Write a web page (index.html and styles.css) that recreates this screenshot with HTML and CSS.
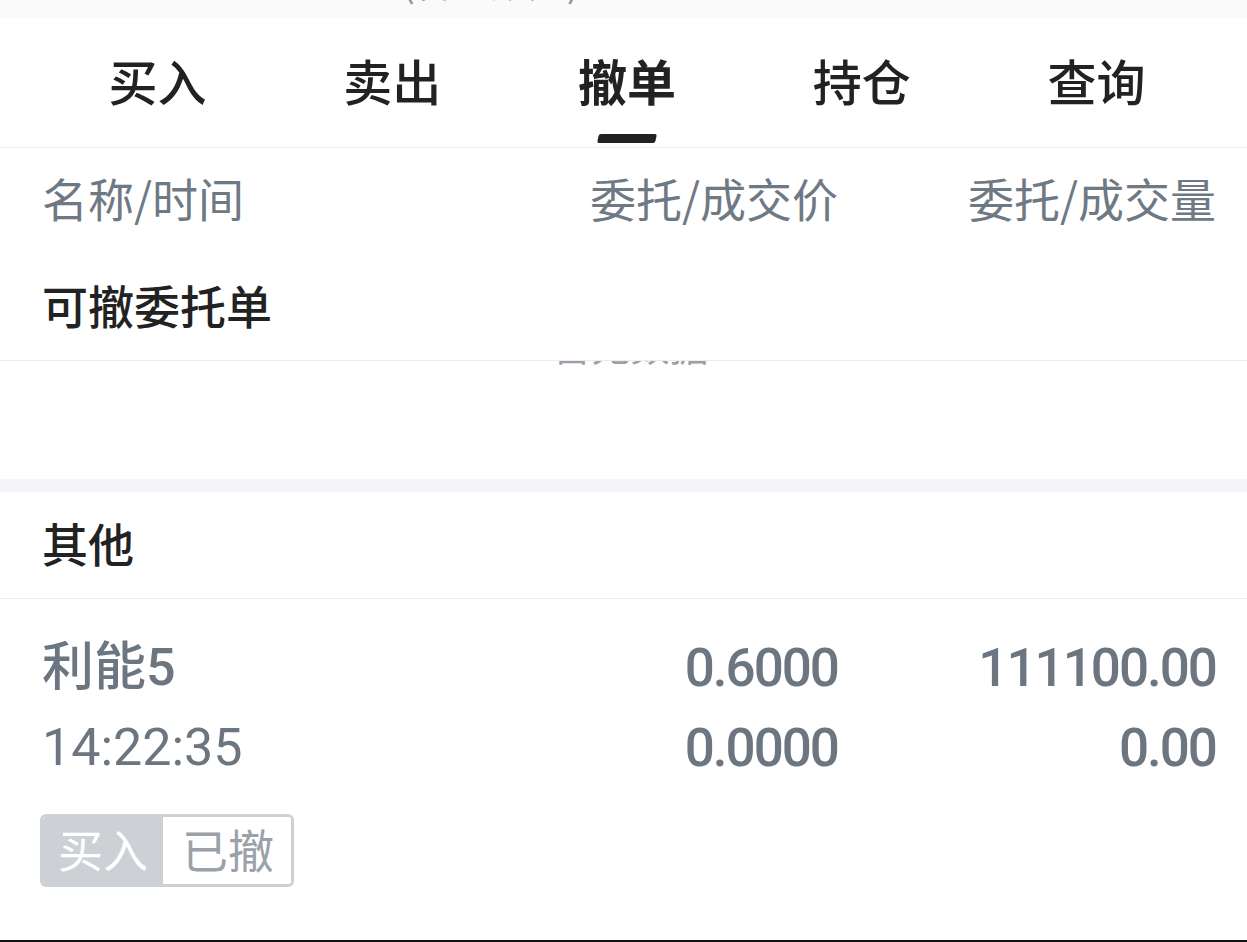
FILE: index.html
```html
<!DOCTYPE html>
<html lang="zh-CN">
<head>
<meta charset="utf-8">
<title>撤单</title>
<link rel="stylesheet" href="styles.css">
</head>
<body>
<div class="page">
  <div class="top-strip"><span class="top-text">(普通账户)  ◔</span></div>
  <nav class="tabs">
    <div class="tab"><span>买入</span></div>
    <div class="tab"><span>卖出</span></div>
    <div class="tab active"><span>撤单</span></div>
    <div class="tab"><span>持仓</span></div>
    <div class="tab"><span>查询</span></div>
  </nav>
  <div class="col-head">
    <span class="c-name">名称/时间</span>
    <span class="c-price">委托/成交价</span>
    <span class="c-qty">委托/成交量</span>
  </div>
  <section class="group">
    <div class="group-title">可撤委托单</div>
    <div class="empty"><span class="empty-text">暂无数据</span></div>
  </section>
  <div class="gap"></div>
  <section class="group">
    <div class="group-title">其他</div>
    <div class="order">
      <div class="order-grid">
        <span class="o-name">利能5</span>
        <span class="o-num">0.6000</span>
        <span class="o-num">111100.00</span>
        <span class="o-time">14:22:35</span>
        <span class="o-num">0.0000</span>
        <span class="o-num">0.00</span>
      </div>
      <div class="badge"><span class="badge-side">买入</span><span class="badge-state">已撤</span></div>
    </div>
  </section>
  <div class="spacer"></div>
  <div class="bottom-line"></div>
</div>
</body>
</html>
```
FILE: styles.css
```css
* { box-sizing: border-box; margin: 0; padding: 0; }
html, body { width: 1247px; height: 942px; overflow: hidden; background: #fff; }
body { font-family: "Noto Sans CJK SC", "Noto Sans", sans-serif; color: #222; }
.page { display: flex; flex-direction: column; height: 942px; }

.top-strip { height: 18px; background: #fafafa; overflow: hidden; padding-left: 402px; }
.top-text { display: block; font-size: 38px; line-height: 40px; margin-top: -39px; color: #8f96a0; white-space: pre; }

.tabs { display: flex; height: 130px; padding: 0 33px 0 40px; border-bottom: 1px solid #ebebeb; background: #fff; }
.tab { flex: 1; position: relative; display: flex; justify-content: center; padding-top: 32px; }
.tab span { font-size: 49px; line-height: 60px; font-weight: 500; color: #222; }
.tab.active span { font-weight: 700; }
.tab.active::after { content: ""; position: absolute; left: 50%; top: 116px; width: 58px; height: 9px; margin-left: -29px; background: #222; border-radius: 2px; transform: skewX(-12deg); }

.col-head { display: grid; grid-template-columns: 1fr 300px 378px; padding: 0 31px 8px 42px; height: 106px; align-items: center; font-size: 46px; color: #6f7984; }
.col-head .c-price, .col-head .c-qty { text-align: right; }

.group-title { height: 107px; display: flex; align-items: center; padding: 0 0 7px 42px; font-size: 46px; font-weight: 500; color: #222; border-bottom: 1px solid #ececec; }

.empty { height: 118px; overflow: hidden; text-align: center; padding-left: 14px; }
.empty-text { display: block; font-size: 39px; line-height: 40px; margin-top: -37px; color: #9aa1a9; }

.gap { height: 13px; background: #f4f5f8; }

.order { padding: 29px 31px 0 42px; }
.order-grid { display: grid; grid-template-columns: 1fr 300px 378px; line-height: 80px; color: #6c7681; }
.o-name { font-family: Roboto, "Noto Sans CJK SC", sans-serif; font-size: 52px; font-weight: 500; }
.o-time { font-family: Roboto, sans-serif; font-size: 52px; font-weight: 400; }
.o-num { font-family: Roboto, sans-serif; font-size: 53px; font-weight: 500; text-align: right; letter-spacing: -2px; }

.badge { display: inline-flex; align-self: flex-start; margin-top: 26px; height: 73px; border: 3px solid #cdd1d6; border-radius: 6px; overflow: hidden; margin-left: -2px; }
.badge-side { background: #cdd1d6; color: #fff; font-size: 45px; line-height: 63px; padding: 0 15px 4px 15px; }
.badge-state { color: #9aa1a9; font-size: 46px; line-height: 63px; padding: 0 17px 4px 19px; background: #fff; }

.spacer { flex: 1; }
.bottom-line { height: 2px; background: #111; }
```
